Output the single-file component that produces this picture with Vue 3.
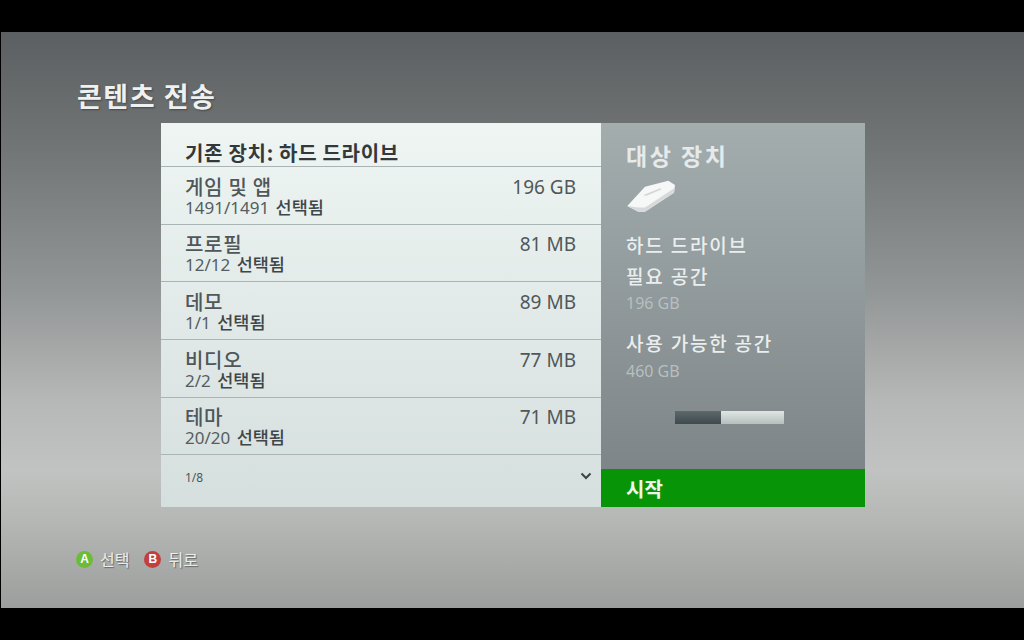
<script setup>
const rows = [
  { name: '게임 및 앱', count: '1491/1491', size: '196 GB' },
  { name: '프로필', count: '12/12', size: '81 MB' },
  { name: '데모', count: '1/1', size: '89 MB' },
  { name: '비디오', count: '2/2', size: '77 MB' },
  { name: '테마', count: '20/20', size: '71 MB' },
]
</script>

<template>
  <div class="page">
    <div class="screen">
      <h1 class="title">콘텐츠 전송</h1>
      <div class="panel">
        <section class="left">
          <div class="head">기존 장치: 하드 드라이브</div>
          <div v-for="r in rows" :key="r.name" class="row">
            <div class="row-text">
              <div class="row-name">{{ r.name }}</div>
              <div class="row-count">{{ r.count }} <span class="row-sel">선택됨</span></div>
            </div>
            <div class="row-size">{{ r.size }}</div>
          </div>
          <div class="foot">
            <span class="pager">1/8</span>
            <svg class="chev" width="12" height="8" viewBox="0 0 12 8">
              <path d="M1.5 1.5 L6 6 L10.5 1.5" fill="none" stroke="#3c4446" stroke-width="2" />
            </svg>
          </div>
        </section>
        <section class="right">
          <div class="right-body">
            <div class="target">대상 장치</div>
            <svg class="drive" width="50" height="36" viewBox="0 0 50 36">
              <path d="M0.3 28 L18 8.7 L41.3 2.7 L48 7 L47 14.7 L18 33.7 L11.3 33.7 Z" fill="#f6f8f8" />
              <path d="M0.3 28 L11 29.5 L18 29.5 L47.6 10 L47 14.7 L18 33.7 L11.3 33.7 Z" fill="#d6dada" />
              <path d="M16.3 17 L33 10.3 L35 11.3 L19 18 Z" fill="#d4d8d8" />
            </svg>
            <div class="label device">하드 드라이브</div>
            <div class="label">필요 공간</div>
            <div class="value">196 GB</div>
            <div class="label avail">사용 가능한 공간</div>
            <div class="value">460 GB</div>
            <div class="meter">
              <div class="meter-used"></div>
              <div class="meter-free"></div>
            </div>
          </div>
          <div class="start">시작</div>
        </section>
      </div>
      <div class="hints">
        <span class="btn btn-a">A</span><span class="hint">선택</span>
        <span class="btn btn-b">B</span><span class="hint">뒤로</span>
      </div>
    </div>
  </div>
</template>

<style>
html, body { margin: 0; background: #000; }
</style>

<style scoped>
.page {
  width: 1024px;
  height: 640px;
  padding: 32px 0 32px 1px;
  box-sizing: border-box;
  background: #000;
  font-family: "Noto Sans CJK KR", "Liberation Sans", sans-serif;
}
.screen {
  height: 576px;
  box-sizing: border-box;
  padding: 47px 0 0 76px;
  background: linear-gradient(180deg, #5b5f61 0%, #727576 20%, #939696 45%, #b5b8b6 64%, #c0c3c1 76%, #b5b7b5 85%, #9c9e9d 100%);
  display: flex;
  flex-direction: column;
}
.title {
  margin: 0;
  font-size: 27px;
  line-height: 34px;
  font-weight: 700;
  color: #eef1f0;
  letter-spacing: 1.5px;
  text-shadow: 1px 1px 2px rgba(0, 0, 0, 0.35);
}
.panel {
  display: flex;
  width: 704px;
  height: 384px;
  margin: 10px 0 0 84px;
}
.left {
  width: 440px;
  display: flex;
  flex-direction: column;
  background: linear-gradient(180deg, #eef5f3 0%, #d5dfde 100%);
}
.head {
  height: 43px;
  box-sizing: border-box;
  padding: 17px 0 0 24px;
  font-size: 20px;
  line-height: 26px;
  font-weight: 700;
  color: #33393a;
  letter-spacing: 0.7px;
  white-space: nowrap;
}
.row {
  height: 57.7px;
  box-sizing: border-box;
  border-top: 1px solid #a9b4b5;
  padding: 7.5px 25px 0 24px;
  display: flex;
  justify-content: space-between;
}
.row-name {
  font-size: 20px;
  line-height: 24px;
  font-weight: 500;
  color: #50575a;
  letter-spacing: 0.7px;
}
.row-count {
  font-family: "Noto Sans", "Noto Sans CJK KR", sans-serif;
  font-size: 17px;
  line-height: 16px;
  color: #565d60;
}
.row-sel {
  font-family: "Noto Sans CJK KR", sans-serif;
  font-size: 17.5px;
  font-weight: 500;
  color: #3f4648;
  margin-left: 2px;
}
.row-size {
  font-family: "Noto Sans", "Noto Sans CJK KR", sans-serif;
  font-size: 19px;
  line-height: 24px;
  color: #50575a;
}
.foot {
  flex: 1;
  border-top: 1px solid #a9b4b5;
  display: flex;
  justify-content: space-between;
  padding: 15px 9px 0 24px;
}
.pager {
  font-family: "Noto Sans", sans-serif;
  font-size: 12px;
  line-height: 16px;
  color: #50575a;
}
.chev { margin-top: 2px; }
.right {
  width: 264px;
  display: flex;
  flex-direction: column;
  background: linear-gradient(180deg, #a3adae 0%, #7a8184 100%);
}
.right-body {
  flex: 1;
  padding: 14px 0 0 25px;
  display: flex;
  flex-direction: column;
  align-items: flex-start;
}
.target {
  font-size: 23px;
  line-height: 36px;
  font-weight: 700;
  color: #e6eaea;
  letter-spacing: 2.5px;
}
.drive { margin: 5px 0 0 1px; }
.label {
  font-size: 19px;
  line-height: 28px;
  font-weight: 500;
  color: #eaeeee;
  letter-spacing: 1.8px;
}
.device { margin-top: 17px; }
.label + .label { margin-top: 3px; }
.value {
  font-family: "Noto Sans", sans-serif;
  font-size: 16px;
  line-height: 22px;
  margin-top: 2px;
  color: #b7bfc0;
}
.label.avail { margin-top: 15px; }
.avail + .value { margin-top: 3px; }
.meter {
  display: flex;
  width: 109px;
  height: 13px;
  margin: 29px 0 0 49px;
}
.meter-used { width: 46px; background: linear-gradient(180deg, #5d686c, #3f4a4e); }
.meter-free { flex: 1; background: linear-gradient(180deg, #dfe5e3, #b6bfbd); }
.start {
  height: 38px;
  box-sizing: border-box;
  padding-left: 25px;
  background: #079507;
  color: #eef6ea;
  font-size: 20px;
  line-height: 40px;
  font-weight: 700;
}
.hints {
  display: flex;
  align-items: center;
  margin-top: 42px;
  margin-left: -1px;
}
.btn {
  width: 17px;
  height: 17px;
  border-radius: 50%;
  color: #fff;
  font-family: "Liberation Sans", sans-serif;
  font-size: 12px;
  font-weight: 700;
  line-height: 17px;
  text-align: center;
}
.btn-a { background: #6cbb3a; }
.btn-b { background: #c23f3d; margin-left: 15px; }
.hint {
  margin-left: 7px;
  font-size: 16px;
  line-height: 20px;
  color: #eceeee;
  text-shadow: 1px 1px 1px rgba(0, 0, 0, 0.4);
}
</style>
